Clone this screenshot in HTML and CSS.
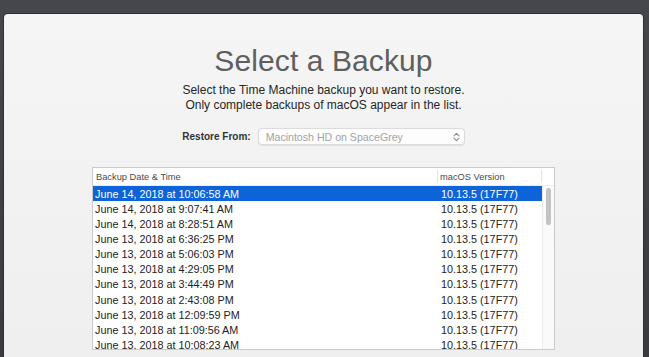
FILE: index.html
```html
<!DOCTYPE html>
<html>
<head>
<meta charset="utf-8">
<link rel="stylesheet" href="styles.css">
</head>
<body>
<div class="panel">
  <h1 class="title">Select a Backup</h1>
  <p class="subtitle">Select the Time Machine backup you want to restore.<br>Only complete backups of macOS appear in the list.</p>
  <div class="restore">
    <span class="restore-label">Restore From:</span>
    <div class="popup">
      <span class="popup-text">Macintosh HD on SpaceGrey</span>
      <svg class="chevrons" width="7" height="10" viewBox="0 0 7 10"><path d="M1 3.8 L3.5 1.3 L6 3.8 M1 6.2 L3.5 8.7 L6 6.2" fill="none" stroke="#8a8a8a" stroke-width="1.1" stroke-linecap="round" stroke-linejoin="round"/></svg>
    </div>
  </div>
  <div class="table">
    <div class="thead">
      <div class="th th-date">Backup Date &amp; Time</div>
      <div class="th th-ver">macOS Version</div>
      <div class="th th-end"></div>
    </div>
    <div class="tbody">
      <div class="rows">
        <div class="row selected"><span class="c-date">June 14, 2018 at 10:06:58 AM</span><span class="c-ver">10.13.5 (17F77)</span></div>
        <div class="row"><span class="c-date">June 14, 2018 at 9:07:41 AM</span><span class="c-ver">10.13.5 (17F77)</span></div>
        <div class="row"><span class="c-date">June 14, 2018 at 8:28:51 AM</span><span class="c-ver">10.13.5 (17F77)</span></div>
        <div class="row"><span class="c-date">June 13, 2018 at 6:36:25 PM</span><span class="c-ver">10.13.5 (17F77)</span></div>
        <div class="row"><span class="c-date">June 13, 2018 at 5:06:03 PM</span><span class="c-ver">10.13.5 (17F77)</span></div>
        <div class="row"><span class="c-date">June 13, 2018 at 4:29:05 PM</span><span class="c-ver">10.13.5 (17F77)</span></div>
        <div class="row"><span class="c-date">June 13, 2018 at 3:44:49 PM</span><span class="c-ver">10.13.5 (17F77)</span></div>
        <div class="row"><span class="c-date">June 13, 2018 at 2:43:08 PM</span><span class="c-ver">10.13.5 (17F77)</span></div>
        <div class="row"><span class="c-date">June 13, 2018 at 12:09:59 PM</span><span class="c-ver">10.13.5 (17F77)</span></div>
        <div class="row"><span class="c-date">June 13, 2018 at 11:09:56 AM</span><span class="c-ver">10.13.5 (17F77)</span></div>
        <div class="row"><span class="c-date">June 13. 2018 at 10:08:23 AM</span><span class="c-ver">10.13.5 (17F77)</span></div>
      </div>
      <div class="scrollbar"><div class="thumb"></div></div>
    </div>
  </div>
</div>
</body>
</html>
```

FILE: styles.css
```css
html, body {
  margin: 0;
  padding: 0;
}
body {
  height: 357px;
  overflow: hidden;
  background: linear-gradient(#46474d, #3a3b40);
  font-family: "Liberation Sans", Arial, sans-serif;
  display: flex;
  flex-direction: column;
}
.panel {
  margin: 14px 6px 0 4px;
  flex: 1;
  background: linear-gradient(#f5f5f5, #efefef);
  border-radius: 4px 4px 0 0;
  box-shadow: 0 0 0 1px #2e2f33;
  display: flex;
  flex-direction: column;
  align-items: center;
  padding-top: 30px;
  overflow: hidden;
}
.title {
  margin: 0;
  font-size: 30px;
  line-height: 34px;
  font-weight: normal;
  color: #5f5f5f;
  letter-spacing: 0.1px;
}
.subtitle {
  margin: 5px 0 0;
  font-size: 12px;
  line-height: 15px;
  color: #262626;
  text-align: center;
}
.restore {
  margin-top: 15px;
  display: flex;
  align-items: center;
  gap: 7px;
}
.restore-label {
  font-size: 10px;
  font-weight: bold;
  color: #333;
}
.popup {
  width: 207px;
  height: 17px;
  box-sizing: border-box;
  background: #fdfdfd;
  border: 1px solid #dcdcdc;
  border-radius: 4px;
  box-shadow: 0 0.5px 1px rgba(0,0,0,0.08);
  display: flex;
  align-items: center;
  justify-content: space-between;
  padding: 0 4px 0 7px;
}
.popup-text {
  font-size: 10.6px;
  color: #a3a3a3;
}
.chevrons {
  display: block;
}
.table {
  margin-top: 22px;
  width: 463px;
  box-sizing: border-box;
  border: 1px solid #cacaca;
  background: #fff;
  display: flex;
  flex-direction: column;
}
.thead {
  display: grid;
  grid-template-columns: 345px 104px 12px;
  height: 17px;
  border-bottom: 1px solid #ececec;
  box-sizing: content-box;
}
.th {
  font-size: 9.3px;
  color: #4a4a4a;
  display: flex;
  align-items: center;
  padding-left: 3px;
}
.th-date {
  padding-left: 3px;
  border-right: 1px solid #e2e2e2;
  margin: 2px 0;
}
.th-ver {
  padding-left: 2px;
  border-right: 1px solid #e2e2e2;
  margin: 2px 0;
}
.tbody {
  display: flex;
  height: 163px;
  overflow: hidden;
}
.rows {
  width: 449px;
}
.row {
  display: grid;
  grid-template-columns: 345px 104px;
  height: 15.15px;
  align-items: center;
  font-size: 10.8px;
  color: #222;
}
.row .c-date {
  padding-left: 2px;
}
.row .c-ver {
  padding-left: 3px;
}
.row.selected {
  background: #0d63d8;
  color: #fff;
}
.scrollbar {
  width: 12px;
  background: #fafafa;
  border-left: 1px solid #ececec;
  box-sizing: border-box;
  padding: 2px 3px 0 3px;
}
.thumb {
  height: 37px;
  background: #c3c3c3;
  border-radius: 3px;
}
```
